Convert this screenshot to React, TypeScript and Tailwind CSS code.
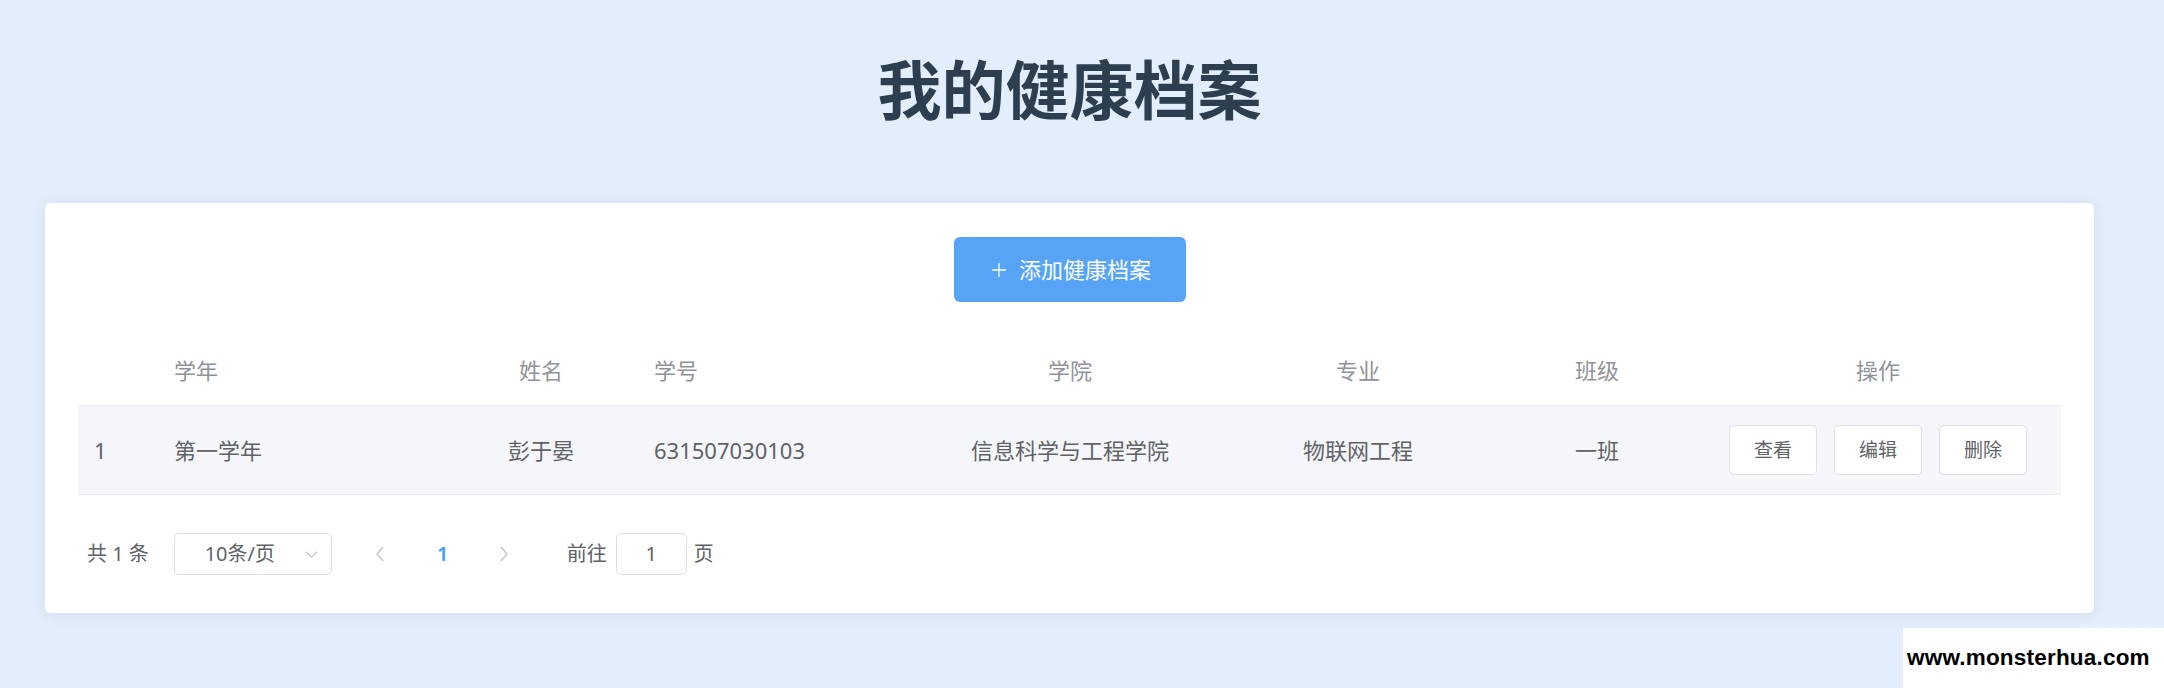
import { Plus } from 'lucide-react';

const font = { fontFamily: '"Noto Sans", "Noto Sans CJK SC", sans-serif' };

const cols = 'grid grid-cols-[81px_284px_196px_285px_292px_284px_194px_368px]';

function Chevron({ dir }: { dir: 'left' | 'right' | 'down' }) {
  const pts = dir === 'left' ? '8,1 2,8 8,15' : dir === 'right' ? '2,1 8,8 2,15' : '1,2 7,8 13,2';
  const box = dir === 'down' ? '0 0 14 10' : '0 0 10 16';
  return (
    <svg viewBox={box} className={dir === 'down' ? 'w-[13px] h-[9px]' : 'w-[10px] h-[16px]'} fill="none" stroke="#c0c4cc" strokeWidth="1.4">
      <polyline points={pts} />
    </svg>
  );
}

function SmallButton({ label }: { label: string }) {
  return (
    <button className="w-[88px] h-[50px] bg-white border border-[#dcdfe6] rounded-[5px] text-[19px] text-[#606266]">
      {label}
    </button>
  );
}

export default function App() {
  return (
    <div className="relative min-h-screen bg-[#e3eefc] pl-[45px] pr-[70px]" style={font}>
      <h1 className="pt-[58px] text-center text-[64px] leading-[64px] font-bold text-[#2c3e50]">我的健康档案</h1>

      <div className="mt-[81px] bg-white rounded-[6px] shadow-[0_2px_16px_0_rgba(0,0,0,0.08)] px-[33px] pt-[34px] pb-[38px]">
        <div className="flex justify-center">
          <button className="flex items-center justify-center gap-[9px] w-[232px] h-[65px] rounded-[6px] bg-[#57a3f6] text-white text-[22px]">
            <Plus className="w-[22px] h-[22px]" strokeWidth={1.4} />
            添加健康档案
          </button>
        </div>

        {/* table */}
        <div className="mt-[34px] text-[22px]">
          <div className={`${cols} h-[70px] items-center text-[#909399] border-b border-[#ebeef5]`}>
            <div />
            <div className="pl-[15px]">学年</div>
            <div className="text-center">姓名</div>
            <div className="pl-[15px]">学号</div>
            <div className="text-center">学院</div>
            <div className="text-center">专业</div>
            <div className="text-center">班级</div>
            <div className="text-center">操作</div>
          </div>
          <div className={`${cols} h-[89px] items-center text-[#606266] bg-[#f5f6fa] border-b border-[#ebeef5]`}>
            <div className="pl-[16px]">1</div>
            <div className="pl-[15px]">第一学年</div>
            <div className="text-center">彭于晏</div>
            <div className="pl-[15px]">631507030103</div>
            <div className="text-center">信息科学与工程学院</div>
            <div className="text-center">物联网工程</div>
            <div className="text-center">一班</div>
            <div className="flex justify-center gap-[17px]">
              <SmallButton label="查看" />
              <SmallButton label="编辑" />
              <SmallButton label="删除" />
            </div>
          </div>
        </div>

        {/* pagination */}
        <div className="mt-[38px] ml-[9px] flex items-center h-[42px] text-[20px] text-[#606266]">
          <span>共 1 条</span>
          <div className="ml-[25px] relative flex items-center justify-center w-[158px] h-[42px] border border-[#dcdfe6] rounded-[5px] pr-[26px]">
            <span>10条/页</span>
            <span className="absolute right-[13px] top-[16px]">
              <Chevron dir="down" />
            </span>
          </div>
          <div className="ml-[17px] w-[62px] flex justify-center">
            <Chevron dir="left" />
          </div>
          <div className="w-[62px] pl-[2px] text-center font-semibold text-[#409eff]">1</div>
          <div className="w-[62px] flex justify-center">
            <Chevron dir="right" />
          </div>
          <span className="ml-[32px]">前往</span>
          <div className="ml-[9px] flex items-center justify-center w-[71px] h-[42px] border border-[#dcdfe6] rounded-[5px]">1</div>
          <span className="ml-[7px]">页</span>
        </div>
      </div>

      <div className="absolute right-0 bottom-0 w-[261px] h-[60px] bg-white flex items-center pl-[4px]">
        <span className="text-[22.5px] font-bold text-black tracking-[0.2px]" style={{ fontFamily: '"Liberation Sans", sans-serif' }}>
          www.monsterhua.com
        </span>
      </div>
    </div>
  );
}
